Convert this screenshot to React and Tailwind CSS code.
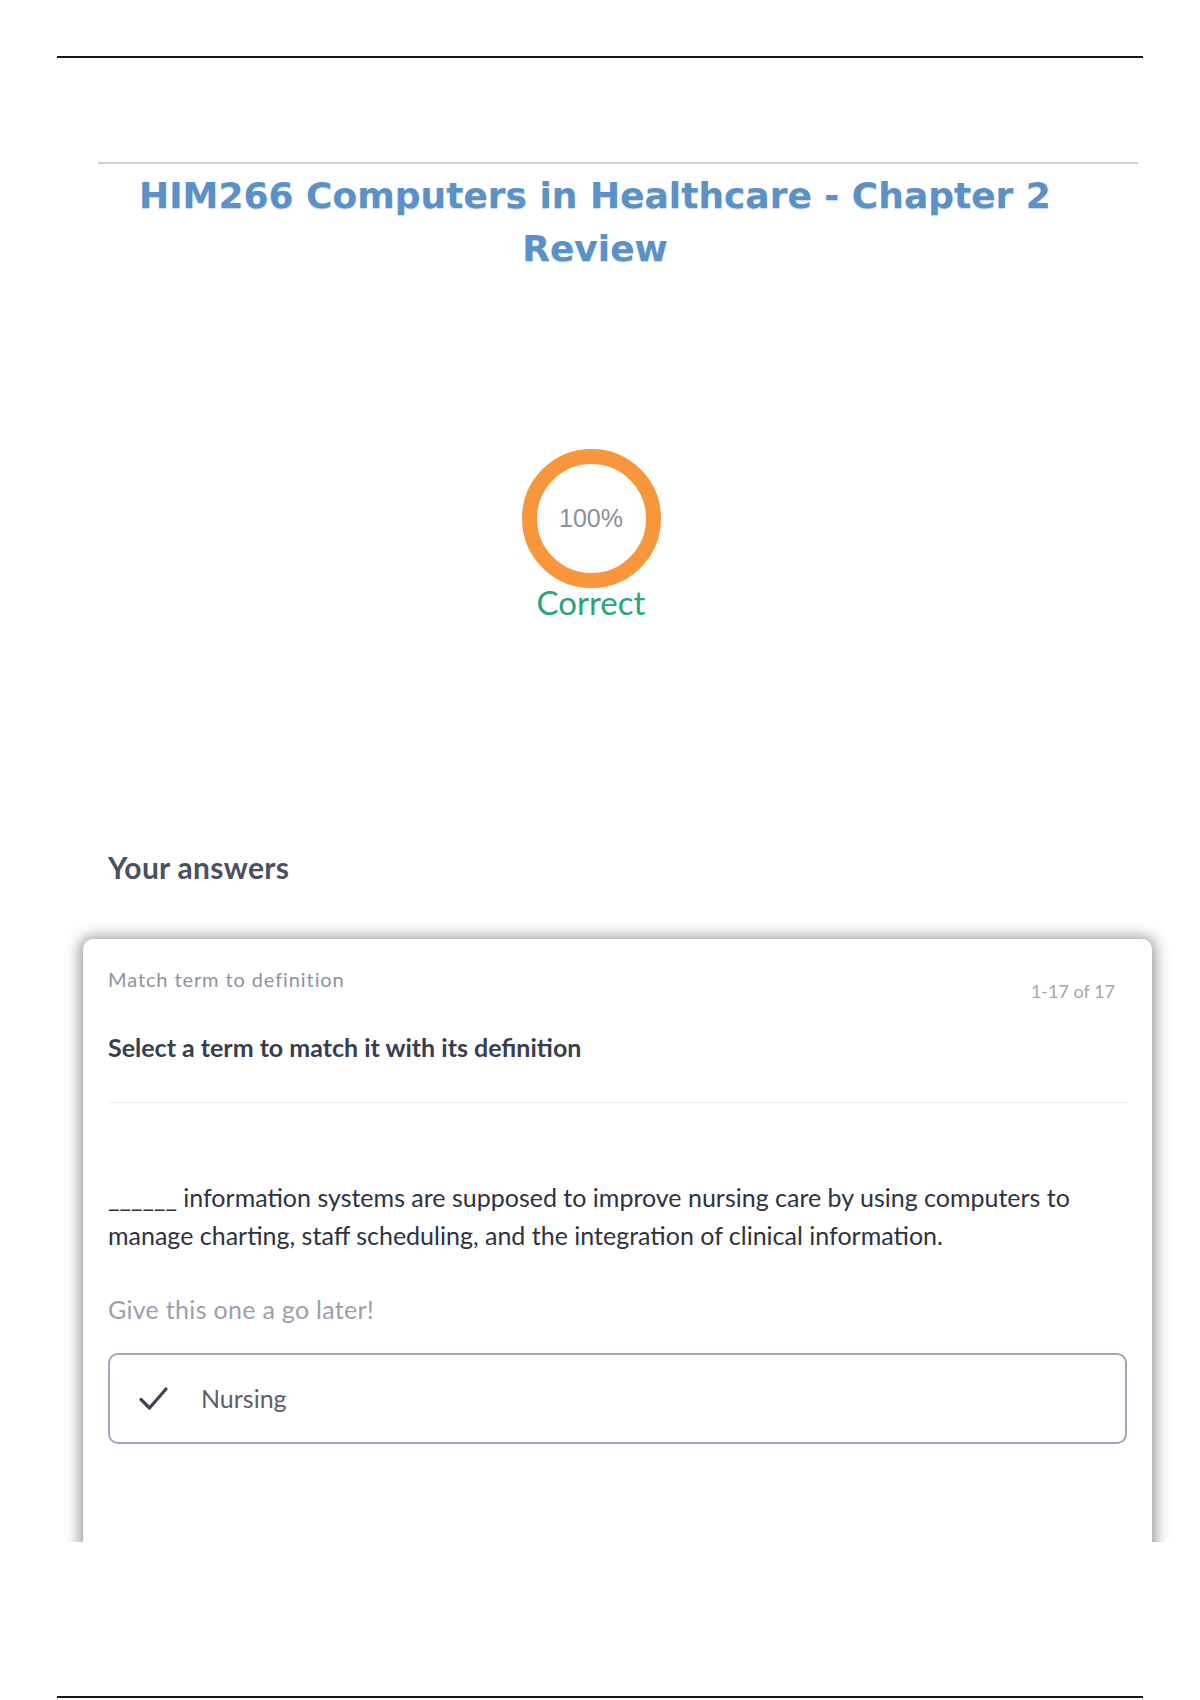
import React from 'react';

const ProgressRing = ({ percent }) => {
    const size = 139;
    const stroke = 15;
    const r = (size - stroke) / 2;
    return (
        <div className="relative w-[139px] h-[139px]">
            <svg width={size} height={size} viewBox={`0 0 ${size} ${size}`}>
                <circle cx={size / 2} cy={size / 2} r={r} fill="none" stroke="#f7963a" strokeWidth={stroke} />
            </svg>
            <div className="absolute inset-0 flex items-center justify-center">
                <span className="text-[25px] text-[#8e9098] font-['Liberation_Sans',Arial,sans-serif]">{percent}%</span>
            </div>
        </div>
    );
};

const App = () => {
    return (
        <div className="w-[1200px] h-[1700px] bg-white flex flex-col font-['Lato','Open_Sans',sans-serif]">
            {/* page frame top */}
            <div className="pt-[56px] px-[57px]">
                <div className="h-[2px] bg-[#161616]" />
            </div>

            <div className="mt-[104px] ml-[98px] w-[1040px] h-[2px] bg-[#d0d0d0]" />

            <h1 className="mt-[5px] w-[1190px] text-center text-[36px] leading-[53px] font-bold text-[#5b91c9] font-['DejaVu_Sans','Liberation_Sans',sans-serif] [text-shadow:0_1px_1px_rgba(60,90,130,0.25)]">
                HIM266 Computers in Healthcare - Chapter 2
                <br />
                Review
            </h1>

            <div className="mt-[174px] w-[1182px] flex flex-col items-center">
                <ProgressRing percent={100} />
                <div className="text-[33px] leading-[28px] text-[#27a67a]">Correct</div>
            </div>

            <h2 className="mt-[234px] ml-[108px] text-[30px] leading-[34px] font-bold tracking-[0.3px] text-[#4a5063]">Your answers</h2>

            <div className="mt-[37px] h-[621px] overflow-hidden pt-[18px]">
                <div className="ml-[83px] w-[1069px] h-[700px] bg-white rounded-[10px] shadow-[0_1px_14px_4px_rgba(40,44,60,0.45)] px-[25px] pt-[28px]">
                    <div className="flex justify-between items-start">
                        <div className="text-[20px] leading-[24px] tracking-[0.9px] text-[#8d929f]">Match term to definition</div>
                        <div className="mt-[12px] mr-[12px] text-[18px] leading-[24px] text-[#a3a6ae]">1-17 of 17</div>
                    </div>

                    <div className="mt-[29px] text-[25px] leading-[30px] font-bold text-[#383e4e]">
                        Select a term to match it with its definition
                    </div>

                    <div className="mt-[40px] h-px bg-[#eaecf0]" />

                    <p className="mt-[75px] text-[25px] leading-[38px] text-[#2d3341]">
                        ______ information systems are supposed to improve nursing care by using computers to
                        <br />
                        manage charting, staff scheduling, and the integration of clinical information.
                    </p>

                    <div className="mt-[40px] text-[25px] leading-[30px] tracking-[0.3px] text-[#9ba0ab]">Give this one a go later!</div>

                    <div className="mt-[29px] h-[91px] border-2 border-[#a2a4b8] rounded-[10px] flex items-center pl-[28px]">
                        <svg width="32" height="28" viewBox="0 0 32 28" fill="none">
                            <path d="M3 14.5 L11.5 23 L28 4" stroke="#3f4455" strokeWidth="3.2" strokeLinecap="round" strokeLinejoin="round" />
                        </svg>
                        <span className="ml-[31px] text-[25px] text-[#5b606e]">Nursing</span>
                    </div>
                </div>
            </div>

            {/* page frame bottom */}
            <div className="mt-[154px] px-[57px]">
                <div className="h-[2px] bg-[#161616]" />
            </div>
        </div>
    );
};

export default App;
